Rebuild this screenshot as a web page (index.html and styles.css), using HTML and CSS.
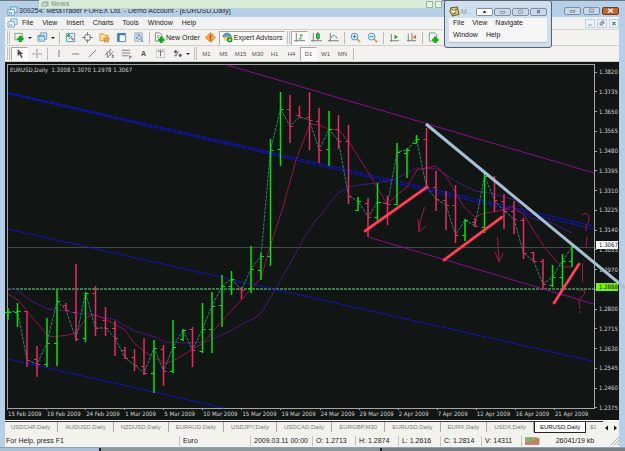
FILE: index.html
```html
<!DOCTYPE html>
<html lang="en">
<head>
<meta charset="utf-8">
<title>MetaTrader</title>
<link rel="stylesheet" href="styles.css">
</head>
<body>
<div class="news"><svg class="news-icon" viewBox="0 0 8 7"><path d="M1 2h5v3h-5zM2 1h5v4" fill="none" stroke="#8da79b"/></svg><span>News</span><span class="news-controls"><i></i><i></i></span></div>
<main class="app">
  <header class="titlebar">
    <svg class="icon" viewBox="0 0 12 12"><path d="M4 1h7v6h-7z" fill="#d5ebf8" stroke="#4f9acb"/><path d="M1 4h7v6h-7z" fill="#f5fbff" stroke="#4f9acb"/><path d="M3 9v-3M5 9v-2" stroke="#3b8a60"/></svg>
    <span class="title">309254: MetaTrader FOREX Ltd. - Demo Account - [EURUSD,Daily]</span>
    <span class="controls">
      <button aria-label="Minimize"><svg viewBox="0 0 16 8"><path d="M5 3.500h6v2h-6z" fill="#fff" stroke="#54677c"/></svg></button>
      <button aria-label="Maximize"><svg viewBox="0 0 16 8"><path d="M5.500 1.500h5v4h-5z" fill="#fff" stroke="#54677c"/><path d="M7 4h2" stroke="#54677c"/></svg></button>
      <button class="close" aria-label="Close"><svg viewBox="0 0 16 8"><path d="M5 1l6 5M11 1l-6 5" stroke="#fff" stroke-width="2"/></svg></button>
    </span>
  </header>
  <nav class="menubar">
    <svg class="icon" viewBox="0 0 12 12"><path d="M4 1h7v6h-7z" fill="#d5ebf8" stroke="#7ba9c9"/><path d="M1 4h7v6h-7z" fill="#f5fbff" stroke="#7ba9c9"/><path d="M3 9v-3M5 9v-2" stroke="#5a94b8"/></svg>
    <button>File</button><button>View</button><button>Insert</button><button>Charts</button><button>Tools</button><button>Window</button><button>Help</button>
    <span class="child-controls">
      <button aria-label="Minimize chart"><svg viewBox="0 0 10 9"><path d="M3 6.500h4" stroke="#526d8c"/></svg></button>
      <button aria-label="Restore chart"><svg viewBox="0 0 10 9"><path d="M4.500 3.500v-2h3v3h-1M2.500 3.500h3v3h-3z" fill="none" stroke="#526d8c"/></svg></button>
      <button aria-label="Close chart"><svg viewBox="0 0 10 9"><path d="M3 2.500l4 4M7 2.500l-4 4" stroke="#526d8c" stroke-width="1.500"/></svg></button>
    </span>
  </nav>
  <div class="toolbar">
    <i class="grip"></i>
    <button class="drop" aria-label="New chart"><svg viewBox="0 0 12 12"><path d="M1 1.500h8v7h-8z" fill="#eef8ee" stroke="#77a080"/><path d="M7 4v7M3.500 7.500h7" stroke="#12a61c" stroke-width="3"/></svg></button>
    <button class="drop" aria-label="Profiles"><svg viewBox="0 0 12 12"><path d="M3.500 1h7v7h-7z" fill="#c9e3f4" stroke="#6a9dbf"/><path d="M1 4h7v6h-7z" fill="#eaf6fd" stroke="#5b94ba"/><path d="M3 9v-3M5.500 9v-2M1 5h7" stroke="#5b94ba"/></svg></button>
    <i class="sep"></i>
    <button aria-label="Market watch"><svg viewBox="0 0 12 12"><path d="M1.500 1.500h9v9h-9z" fill="#eef7ff" stroke="#5a8eb5"/><path d="M3 3l2 2" stroke="#159a35" stroke-width="3"/><path d="M7 6l2 3" stroke="#e07036" stroke-width="2"/><path d="M4 8l4-4" stroke="#3d8abd"/></svg></button>
    <button aria-label="Data window"><svg viewBox="0 0 12 12"><circle cx="6" cy="6" r="3.500" fill="none" stroke="#6e7882"/><path d="M6 0v4M6 8v4M0 6h4M8 6h4" stroke="#6e7882"/></svg></button>
    <button aria-label="Navigator"><svg viewBox="0 0 12 12"><path d="M1 2h4l1 1.500h4v6h-9z" fill="#fbe199" stroke="#d09b3e"/><path d="M8 5l1 2 2.500.3-1.800 1.500.5 2.500-2.200-1.300-2.200 1.300.5-2.500L4.500 7.300 7 7z" fill="#f6a548" stroke="#c8762a" stroke-width=".7"/></svg></button>
    <button aria-label="Terminal"><svg viewBox="0 0 12 12"><path d="M1.500 1.500h9v9h-9z" fill="#f6fbff" stroke="#4a8abf"/><path d="M2 2.500h8M3 2v8" stroke="#3a78b4" stroke-width="2"/></svg></button>
    <button aria-label="Strategy tester"><svg viewBox="0 0 12 12"><path d="M2 1h8v9h-8z" fill="#edf3f8" stroke="#8ca1b3"/><path d="M3 3h5M4 8v-3M6 6v-2" stroke="#7394ae"/><circle cx="7" cy="6" r="2" fill="#d9ecf7" stroke="#5485a8"/><path d="M9 8l2 3" stroke="#5485a8"/></svg></button>
    <i class="sep"></i>
    <button class="wide"><svg viewBox="0 0 12 12"><path d="M1.500 1h5l2 2v7h-7z" fill="#fafcfa" stroke="#6f8d7a"/><path d="M3 4h3M3 6h3" stroke="#829c8b"/><path d="M8 5v7M4.500 8.500h7" stroke="#12a61c" stroke-width="3"/></svg>New Order</button>
    <button aria-label="Alerts"><svg viewBox="0 0 12 12"><path d="M6 .7L11.300 6 6 11.300.7 6z" fill="#f8aa4c" stroke="#d98a34"/><path d="M6 3v4M6 8v1.500" stroke="#a34018" stroke-width="1.500"/></svg></button>
    <button class="wide on"><svg viewBox="0 0 12 12"><path d="M1 5c1-5 8-5 9 0z" fill="#529ccd" stroke="#337aa7"/><path d="M0 5q5 3 11 0" fill="#f1cd72" stroke="#b48d40"/><path d="M2 6c0 5 6 5 7 0" fill="#f1cd72"/><circle cx="8.500" cy="8.500" r="3" fill="#19a42c"/><path d="M7.800 7v3l2-1.500z" fill="#fff"/></svg>Expert Advisors</button>
    <i class="grip"></i>
    <button class="on" aria-label="Bar chart"><svg viewBox="0 0 12 12"><path d="M2.500 1v9.500M0 9.500h12" stroke="#707970"/><path d="M7.500 2v6M5 7.500h2M8 3.500h2" stroke="#1b9d38"/></svg></button>
    <button aria-label="Candlesticks"><svg viewBox="0 0 12 12"><path d="M2.500 1v9.500M0 9.500h12M7.500 0v9" stroke="#707970"/><path d="M6 2h3v5h-3z" fill="#26cf3c" stroke="#168d29"/></svg></button>
    <button aria-label="Line chart"><svg viewBox="0 0 12 12"><path d="M2.500 1v9.500M0 9.500h12" stroke="#707970"/><path d="M3 7q3-7 7 0" fill="none" stroke="#568b65"/></svg></button>
    <i class="sep"></i>
    <button aria-label="Zoom in"><svg viewBox="0 0 12 12"><path d="M7 7l4 4" stroke="#d1a34a" stroke-width="2"/><circle cx="5" cy="5" r="3.700" fill="#d7effd" stroke="#4b8fbb"/><path d="M3 5h4M5 3v4" stroke="#347eaf"/></svg></button>
    <button aria-label="Zoom out"><svg viewBox="0 0 12 12"><path d="M7 7l4 4" stroke="#d1a34a" stroke-width="2"/><circle cx="5" cy="5" r="3.700" fill="#d7effd" stroke="#4b8fbb"/><path d="M3 5h4" stroke="#347eaf"/></svg></button>
    <i class="sep"></i>
    <button aria-label="Auto scroll"><svg viewBox="0 0 12 12"><path d="M2.500 2v8.500M1 9.500h10" stroke="#707970"/><path d="M6 3v5l4-2.500z" fill="#19a536"/></svg></button>
    <button aria-label="Chart shift"><svg viewBox="0 0 12 12"><path d="M2.500 2v8.500M1 9.500h10M6.500 1v8" stroke="#707970"/><path d="M11 3v5L7.500 5.500z" fill="#dd6931"/></svg></button>
    <i class="sep"></i>
    <button aria-label="Indicators"><svg viewBox="0 0 12 12"><path d="M1.500 1h6l2 2v7h-8z" fill="#f4f7f4" stroke="#809886"/><path d="M8 5v7M4.500 8.500h7" stroke="#12b11c" stroke-width="3"/></svg></button>
  </div>
  <div class="toolbar drawing">
    <i class="grip"></i>
    <button class="on" aria-label="Cursor"><svg viewBox="0 0 12 12"><path d="M4 1v8l2-2 2 4 1.500-1-2-3.500h2.500z" fill="#4b4b4b"/></svg></button>
    <button aria-label="Crosshair"><svg viewBox="0 0 12 12"><path d="M6.500 1v10M1 6.500h4M8 6.500h4" stroke="#8b8b8b"/></svg></button>
    <i class="sep"></i>
    <button aria-label="Vertical line"><svg viewBox="0 0 12 12"><path d="M6.500 2v8" stroke="#777"/></svg></button>
    <button aria-label="Horizontal line"><svg viewBox="0 0 12 12"><path d="M2 6.500h8" stroke="#777"/></svg></button>
    <button aria-label="Trend line"><svg viewBox="0 0 12 12"><path d="M2 10l8-8" stroke="#777"/></svg></button>
    <button aria-label="Channel"><svg viewBox="0 0 12 12"><path d="M1 8l7-7M3 11l7-7M3 4l1 6M6 2l1 6" stroke="#777"/><path d="M9 8h2M9 10h2M9 7v4" stroke="#777"/></svg></button>
    <button aria-label="Fibonacci"><svg viewBox="0 0 12 12"><path d="M1 2.500h9M1 5.500h9M1 8.500h7M9.500 8v4M9 9.500h3" stroke="#777"/></svg></button>
    <button class="letter" aria-label="Text">A</button>
    <button aria-label="Text label"><svg viewBox="0 0 12 12"><path d="M1.500 1.500h9v9h-9z" fill="none" stroke="#999" stroke-dasharray="1 1"/><path d="M3 3.500h6M6 3v6" stroke="#666"/></svg></button>
    <button class="drop" aria-label="Arrows"><svg viewBox="0 0 12 12"><path d="M2 4l2-2 2 2-2 2zM7 8l2-2 2 2-2 2z" fill="#555"/><path d="M3 7l1 2 3-5" fill="none" stroke="#555"/></svg></button>
    <i class="grip"></i>
    <button>M1</button><button>M5</button><button>M15</button><button>M30</button><button>H1</button><button>H4</button><button class="on">D1</button><button>W1</button><button>MN</button>
    <i class="sep"></i>
  </div>
  <section class="chart">
    <div class="plot">
      <svg id="plot" viewBox="8 65 586 343" preserveAspectRatio="none" role="img" aria-label="EURUSD daily chart">
        <path class="price" d="M8 247.500H594"/>
        <path class="bid" d="M8 289H594"/>
        <g class="blue">
          <path d="M8 92.500L594 226"/><path d="M8 93.500L594 229"/>
          <path d="M8 229L594 361.500"/><path d="M8 359L224 408"/>
        </g>
        <path class="channel" d="M227 65L594 173M368 237L594 304"/>
        <polyline class="slow" points="8,288 17,290 30,300 47,309 66,311 76,313 90,314 115,320 135,331 155,337 165,342 190,343 205,342 222,335 258,316 263,310 275,290 310,228 338,193 349,187 360,185 390,181 403,175 417,168 437,169 457,182 475,191 490,193 515,200 530,218 550,222 572,233"/>
        <polyline class="fast" points="8,294 18,300 32,317 47,335 52,337 68,335 76,333 87,317 95,315 105,319 125,330 135,344 148,354 165,363 173,361 193,349 202,344 223,320 261,278 270,247 283,207 296,160 310,124 319,125 329,129 339,130 349,142 368,172 387,204 397,195 407,187 417,170 426,168 436,166 446,176 464,207 475,217 485,213 504,210 512,206 524,215 534,231 543,245 555,260 562,267 572,267"/>
        <g id="bars"></g>
        <g class="sketch">
          <path d="M424.500 207L420 223L419 232M418 219L419 232L426 226"/>
          <path d="M497.500 237L499 262M495 252L499 262L503 253"/>
          <path d="M582 215L586 213L589 216V221L586 226V231M587 237L586 248M582.500 263V282M578 290L584 290L585 293L579 300L580 309M580 311V313"/>
        </g>
        <g class="support">
          <path d="M365 231L427 187M444 260L502 217M554 303L579 264"/>
        </g>
        <g class="support-core">
          <path d="M365 231L427 187M444 260L502 217M554 303L579 264"/>
        </g>
        <path class="resistance" d="M426 124L625 288"/>
      </svg>
      <div class="legend">EURUSD,Daily&nbsp; 1.3008 1.3070 1.2978 1.3067</div>
    </div>
    <div class="prices">
      <span>1.3820</span><span>1.3735</span><span>1.3650</span><span>1.3565</span><span>1.3480</span><span>1.3395</span><span>1.3310</span><span>1.3225</span><span>1.3140</span><span>1.3055</span><span>1.2970</span><span></span><span>1.2800</span><span>1.2715</span><span>1.2630</span><span>1.2545</span><span>1.2460</span><span>1.2375</span>
      <b class="tag last">1.3067</b><b class="tag level">1.2888</b>
    </div>
    <div class="dates">
      <span>15 Feb 2009</span><span>19 Feb 2009</span><span>24 Feb 2009</span><span>1 Mar 2009</span><span>5 Mar 2009</span><span>10 Mar 2009</span><span>15 Mar 2009</span><span>19 Mar 2009</span><span>24 Mar 2009</span><span>29 Mar 2009</span><span>2 Apr 2009</span><span>7 Apr 2009</span><span>12 Apr 2009</span><span>16 Apr 2009</span><span>21 Apr 2009</span>
    </div>
  </section>
  <div class="tabs">
    <div class="tab-list">
      <button>USDCHF,Daily</button><button>AUDUSD,Daily</button><button>NZDUSD,Daily</button><button>EURAUD,Daily</button><button>USDJPY,Daily</button><button>USDCAD,Daily</button><button>EURGBP,M30</button><button>EURUSD,Daily</button><button>EURX,Daily</button><button>USDX,Daily</button><button class="active">EURUSD,Daily</button><button>EI</button>
    </div>
    <button class="scroll" aria-label="Scroll left"><svg viewBox="0 0 6 8"><path d="M4 1.500v5L1 4z"/></svg></button>
    <button class="scroll" aria-label="Scroll right"><svg viewBox="0 0 6 8"><path d="M2 1.500v5L5 4z"/></svg></button>
  </div>
  <footer class="status">
    <span>For Help, press F1</span><span>Euro</span><span>2009.03.11 00:00</span><span>O: 1.2713</span><span>H: 1.2874</span><span>L: 1.2616</span><span>C: 1.2814</span><span>V: 14311</span>
    <span class="traffic"><svg viewBox="0 0 15 8"><path d="M0 .5h15v7h-15z" fill="#d8c9a0"/><path d="M1 0v5M3 0v5M5 0v5M7 0v4M9 0v3M11 0v2" stroke="#4f8c2c"/><path d="M1 5v3M3 5v3M5 5v3M7 4v4M9 3v5M11 2v6M13 1v7" stroke="#b03430"/></svg>26041/19 kb<svg class="size" viewBox="0 0 9 9"><path d="M1 9l8-8M4 9l5-5M7 9l2-2" stroke="#a9a9a4"/></svg></span>
  </footer>
</main>
<div class="desktop"><i></i><i></i><i></i></div>
<aside class="float">
  <div class="float-title">
    <svg class="icon" viewBox="0 0 12 12"><path d="M2 2l7-1 2 8-7 2-3-5z" fill="#eacb70" stroke="#514629"/><path d="M3 4l3 1 3-2M4 9l4-2" stroke="#433c2b" fill="none"/><circle cx="5" cy="6" r="1.500" fill="#fff"/></svg>
    <span>M..</span>
    <button class="white" aria-label="Roll up"><svg viewBox="0 0 16 8"><path d="M8 2l2.500 3h-5z" fill="#111"/></svg></button>
    <button aria-label="Minimize panel"><svg viewBox="0 0 16 8"><path d="M5 3.500h6v2h-6z" fill="#fff" stroke="#677787"/></svg></button>
    <button aria-label="Maximize panel"><svg viewBox="0 0 16 8"><path d="M5.500 1.500h5v4h-5z" fill="#fff" stroke="#677787"/><path d="M7 4h2" stroke="#677787"/></svg></button>
    <button aria-label="Close panel"><svg viewBox="0 0 16 8"><path d="M6 1.500l4 4M10 1.500l-4 4" stroke="#5c6c7c" stroke-width="1.500"/></svg></button>
  </div>
  <nav class="float-menu"><button>File</button><button>View</button><button>Navigate</button><button>Window</button><button>Help</button></nav>
</aside>
<script src="chart.js"></script>
</body>
</html>
```
FILE: styles.css
```css
* { box-sizing: border-box; }
body {
  margin: 0;
  height: 100vh;
  display: flex;
  flex-direction: column;
  overflow: hidden;
  background: #b7cfe6;
  color: #222;
  font: 7px/10px "Liberation Sans", Arial, sans-serif;
}
button {
  margin: 0;
  padding: 0;
  border: 0;
  background: none;
  color: inherit;
  font: inherit;
  white-space: nowrap;
}
svg { display: block; flex: none; }
.icon { width: 11px; height: 11px; }

.app {
  flex: 1;
  min-height: 0;
  display: flex;
  flex-direction: column;
  padding: 0 6px 0 5px;
  border-top: 1px solid #6d7780;
  border-bottom: 1px solid #8da0b2;
}
.titlebar {
  height: 16px;
  flex: none;
  display: flex;
  align-items: flex-end;
  gap: 1px;
  padding-left: 2px;
}
.title { flex: 1; padding-bottom: 1px; white-space: nowrap; color: #1f2a36; }
.controls { display: flex; gap: 2px; padding: 0 0 2px; }
.controls button, .float-title button {
  width: 17px;
  height: 8px;
  border: 1px solid #7b8fa6;
  border-radius: 2px;
  background: #c9d9ea;
}
.controls svg, .float-title button svg { width: 15px; height: 6px; }
.controls .close { background: #c2692f; border-color: #6d3a2a; }

.menubar {
  height: 13px;
  flex: none;
  display: flex;
  align-items: center;
  background: #f2f2f2;
  padding-left: 2px;
  border-bottom: 1px solid #d4d4d0;
}
.menubar > button { margin-left: 9px; }
.menubar > .icon + button { margin-left: 4px; }
.child-controls { margin-left: auto; display: flex; gap: 2px; }
.child-controls button { width: 10px; height: 9px; border: 1px solid #c1cfde; background: #eef4fb; }
.child-controls svg { width: 8px; height: 7px; }

.toolbar {
  height: 16px;
  flex: none;
  display: flex;
  align-items: center;
  background: #f3f2ef;
  border-bottom: 1px solid #d2d0ca;
}
.toolbar button {
  width: 17px;
  height: 14px;
  flex: none;
  display: flex;
  align-items: center;
  justify-content: center;
}
.toolbar button svg { width: 11px; height: 11px; }
.toolbar .drop { width: 23px; gap: 3px; }
.toolbar .drop::after { content: ""; border: 2px solid transparent; border-top-color: #222; border-bottom: 0; }
.toolbar .wide { width: auto; gap: 1px; padding: 0 2px; }
.toolbar .on { background: #fbfaf8; border: 1px solid #fff; border-top-color: #a9a7a2; border-left-color: #a9a7a2; }
.toolbar .letter { font-size: 7px; font-weight: bold; }
.sep { flex: none; width: 1px; height: 12px; margin: 0 2px; background: #bdbbb5; }
.grip { flex: none; width: 3px; height: 13px; margin: 0 1px 0 2px; border: 1px solid #c2c0ba; border-width: 0 1px; }
.drawing { color: #555; font-size: 6px; }

.chart {
  flex: 1;
  min-height: 0;
  display: grid;
  grid-template: minmax(0, 1fr) 11px / minmax(0, 1fr) 24px;
  padding: 2px 0 0 2px;
  background: #111615;
  color: #d2d2d2;
  font: 6px/8px "DejaVu Sans Condensed", "DejaVu Sans", sans-serif;
}
.plot { position: relative; z-index: 1; border: 1px solid #a5a5a5; min-height: 0; }
.plot svg { width: 100%; height: 100%; overflow: visible; fill: none; }
.legend { position: absolute; top: 1px; left: 2px; white-space: nowrap; }
.price { stroke: #454b4b; }
.bid { stroke: #357a48; stroke-width: 2; stroke-dasharray: 3 1; }
.blue { stroke: #1212d8; stroke-dasharray: 5 1; }
.channel { stroke: #87108c; }
.slow { stroke: #4b1878; }
.fast { stroke: #98104e; }
.close-line { stroke: #2b8272; stroke-dasharray: 3 1; }
.up { stroke: #0be00b; }
.down { stroke: #e52d62; }
.body { stroke-width: 1.5; }
.sketch { stroke: #a3184c; }
.support { stroke: #f4275f; stroke-width: 3; stroke-linecap: round; }
.support-core { stroke: #ef7434; stroke-width: 1; }
.resistance { stroke: #a9c0d2; stroke-width: 3; }
.prices {
  position: relative;
  display: flex;
  flex-direction: column;
  justify-content: space-between;
  padding-top: 4px;
  margin-bottom: -3px;
}
.prices span { display: flex; align-items: center; gap: 2px; height: 8px; }
.prices span::before { content: ""; width: 2px; height: 1px; background: #a5a5a5; }
.tag { position: absolute; left: 1px; right: 1px; height: 8px; padding-left: 3px; font-weight: normal; color: #111; }
.last { top: 51%; background: #fff; }
.level { top: 63%; background: #7cf400; }
.dates {
  display: grid;
  grid-template-columns: repeat(15, minmax(0, 1fr));
  padding-right: 2px;
  line-height: 10px;
  white-space: nowrap;
}
.dates span { border-left: 1px solid transparent; border-image: linear-gradient(#a5a5a5 2px, transparent 2px) 1; }

.tabs {
  height: 14px;
  flex: none;
  display: flex;
  border-top: 1px solid #fff;
  background: #f2f1ee;
  color: #7d7c77;
  font-size: 6px;
}
.tab-list { flex: 1; min-width: 0; display: flex; align-items: flex-start; overflow: hidden; border-top: 1px solid #333; }
.tab-list button { flex: none; padding: 0 7px; border-right: 1px solid #aaa8a2; }
.tab-list button:first-child { padding-left: 6px; }
.tab-list button:last-child { border: 0; padding: 0 0 0 4px; }
.tab-list .active { background: #fff; color: #111; border: 1px solid #222; border-top: 0; padding: 0 5px; }
.scroll { width: 8px; }
.scroll svg { width: 6px; height: 8px; fill: #111; margin: auto; }

.status {
  height: 13px;
  flex: none;
  display: grid;
  grid-template-columns: 174fr 71fr 62fr 43fr 43fr 42fr 41fr 40fr 98fr;
  align-items: center;
  background: #f3f2ef;
}
.status > span { padding-left: 3px; border-left: 1px solid #c5c3bd; white-space: nowrap; }
.status > span:first-child { padding-left: 0; border-color: transparent; }
.traffic { display: flex; align-items: center; justify-content: space-between; }
.traffic svg { width: 15px; height: 8px; }
.traffic .size { width: 9px; height: 9px; }

.desktop { height: 3px; flex: none; display: flex; }
.desktop i { flex: 100; background: #a9bfd4; border-right: 2px solid #222; }
.desktop i + i { flex: 280; background: #8d979e; }
.desktop i + i + i { flex: 245; background: #777f87; border: 0; }

.news {
  position: absolute;
  z-index: 2;
  top: 0;
  left: 39px;
  width: 403px;
  height: 9px;
  display: flex;
  align-items: center;
  gap: 2px;
  padding-left: 2px;
  background: #d8ebd8;
  border-bottom: 1px solid #c3d8ca;
  color: #8fa39a;
  font: bold 7px/8px "Liberation Sans", Arial, sans-serif;
}
.news-icon { width: 8px; height: 7px; }
.news-controls { display: flex; gap: 2px; margin-left: auto; }
.news-controls i { width: 7px; height: 7px; border: 1px solid #9fb3a6; background: #e8f2e8; }

.float {
  position: absolute;
  z-index: 3;
  top: 0;
  left: 444px;
  width: 108px;
  padding: 6px 4px 4px;
  border: 1px solid #56616d;
  border-radius: 3px;
  background: #cfdfee;
}
.float-title { display: flex; align-items: center; gap: 1px; color: #8796a5; height: 9px; }
.float-title span { flex: 1; }
.float-title .white { background: #fff; }
.float-menu {
  display: flex;
  flex-wrap: wrap;
  gap: 2px 8px;
  margin-top: 2px;
  padding: 0 4px 2px;
  background: #f6f6f6;
  border-bottom: 1px solid #b5bcc3;
}
```
FILE: chart.js
```js
// Each bar: x, high, low, open, close, in plot units
const bars = [
  [8,308,320,312,312],[17.5,303,327,312,311],[27,311,367,311,360],[37,346,377,359,364],
  [47,318,367,364,343],[57,290,366,343,301],[66,303,311,305,310],[76,264,341,312,339],
  [85.5,292,342,338,293],[95.5,286,336,293,328],[105.5,307,336,320,328],[115,321,356,328,338],
  [125,347,359,350,358],[134.5,349,371,357,365],[144,338,375,366,373],[154,340,393,373,348],
  [163.5,345,386,349,371],[173,320,373,371,347],[183,329,341,339,330],[192.5,327,367,329,350],
  [202.5,303,353,351,329],[212,292,353,329,306],[222,275,327,305,286],[231.5,271,295,286,279],
  [241.5,287,299,289,290],[251,246,293,288,269],[261,253,280,270,256],[270.5,139,266,256,150],
  [280.5,92,166,149,109],[290,95,143,109,126],[299.5,106,117,115,117],[309.5,92,150,117,120],
  [319,108,163,121,150],[329,111,166,149,129],[338.5,115,149,129,141],[348.5,125,204,141,196],
  [358,197,211,210,201],[368,198,237,203,217],[377.5,183,222,217,202],[387.5,196,225,203,204],
  [397,143,205,204,152],[407,148,178,153,150],[416.5,135,143,143,139],[426.5,128,187,139,187],
  [436,171,211,187,199],[446,191,230,200,205],[455.5,185,243,205,235],[465,219,241,235,220],
  [475,218,227,222,226],[484.5,173,233,227,176],[494.5,176,212,177,200],[504,194,229,201,211],
  [514,201,234,211,219],[523.5,218,259,220,253],[533.5,252,262,252,261],[543,259,289,261,284],
  [552.5,265,287,285,277],[562.5,254,288,277,261],[572,246,267,261,247]
];
const closes = bars.map(([x, , , , close]) => `${x},${close}`).join(" ");
const marks = bars.map(([x, high, low, open, close]) => {
  const kind = close <= open ? "up" : "down";
  return `<g class="${kind}"><path class="body" d="M${x} ${high}V${low}"/><path d="M${x - 3} ${open + 0.5}h3M${x} ${close + 0.5}h3"/></g>`;
});
document.getElementById("bars").innerHTML =
  `<polyline class="close-line" points="${closes}"/>` + marks.join("");
```
